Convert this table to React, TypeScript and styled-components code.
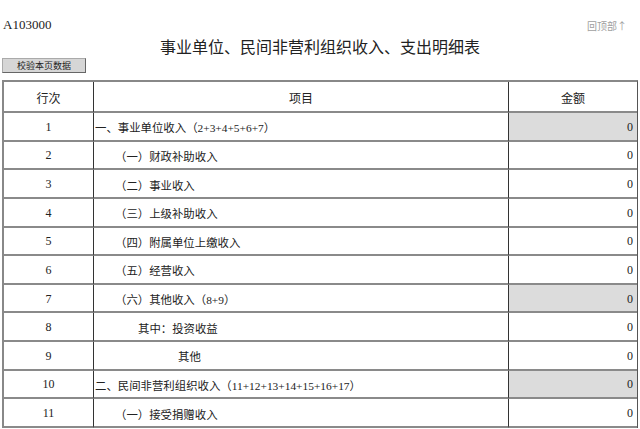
import React from "react";
import styled, { createGlobalStyle } from "styled-components";

const Global = createGlobalStyle`
  html, body { margin: 0; padding: 0; background: #fff; }
  body { font-family: "Liberation Serif", "Noto Sans CJK SC", serif; color: #222; }
`;

const Page = styled.div`
  width: 640px;
  height: 429px;
  overflow: hidden;
  padding: 0 2px;
  box-sizing: border-box;
`;

const TopBar = styled.div`
  display: flex;
  justify-content: space-between;
  align-items: center;
  height: 14px;
  margin-top: 18px;
`;

const Code = styled.span`
  font-family: "Liberation Serif", serif;
  font-size: 13px;
  color: #222;
  padding-left: 1px;
`;

const BackTop = styled.span`
  font-family: "Noto Sans CJK SC", sans-serif;
  font-size: 10px;
  color: #a0a0a0;
  margin-right: 11px;
`;

const Title = styled.h1`
  margin: 2px 0 0 0;
  height: 24px;
  line-height: 24px;
  text-align: center;
  font-family: "Noto Sans CJK SC", serif;
  font-weight: 400;
  font-size: 16px;
  color: #222;
`;

const CheckButton = styled.button`
  display: block;
  margin: 0;
  width: 84px;
  height: 15px;
  padding: 0;
  background: #d6d6d6;
  border: 1px solid #666;
  border-top-color: #aaa;
  border-left-color: #aaa;
  font-family: "Noto Sans CJK SC", sans-serif;
  font-size: 9px;
  line-height: 13px;
  color: #222;
`;

const Table = styled.div`
  margin-top: 7px;
  width: 636px;
  display: grid;
  grid-template-columns: 90px 415px 1fr;
  grid-template-rows: 31px repeat(11, 28.64px);
  border-top: 2px solid #888;
  border-left: 2px solid #888;
  border-right: 1px solid #555;
  box-sizing: border-box;
`;

const Cell = styled.div<{ $align?: "left" | "center" | "right"; $gray?: boolean; $indent?: number; $last?: boolean }>`
  display: flex;
  align-items: center;
  justify-content: ${(p) => (p.$align === "left" ? "flex-start" : p.$align === "right" ? "flex-end" : "center")};
  padding-top: 2px;
  padding-left: ${(p) => p.$indent ?? 0}px;
  padding-right: ${(p) => (p.$align === "right" ? 4 : 0)}px;
  border-bottom: 2px solid #8a8a8a;
  border-right: ${(p) => (p.$last ? "none" : "1px solid #333")};
  background: ${(p) => (p.$gray ? "#dcdcdc" : "#fff")};
  font-size: 11.4px;
  color: #222;
  white-space: nowrap;
  box-sizing: border-box;
  overflow: hidden;
`;

const HeadCell = styled(Cell)`
  font-family: "Noto Sans CJK SC", sans-serif;
  font-size: 12px;
`;

const RowNo = styled.span`
  font-family: "Liberation Serif", serif;
  font-size: 12px;
  color: #222;
`;

const Amount = styled.span`
  font-family: "Liberation Serif", serif;
  font-size: 12px;
`;

type Row = { n: string; label: string; indent: number; gray?: boolean };

const rows: Row[] = [
  { n: "1", label: "一、事业单位收入（2+3+4+5+6+7）", indent: 1, gray: true },
  { n: "2", label: "（一）财政补助收入", indent: 21 },
  { n: "3", label: "（二）事业收入", indent: 21 },
  { n: "4", label: "（三）上级补助收入", indent: 21 },
  { n: "5", label: "（四）附属单位上缴收入", indent: 21 },
  { n: "6", label: "（五）经营收入", indent: 21 },
  { n: "7", label: "（六）其他收入（8+9）", indent: 21, gray: true },
  { n: "8", label: "其中：投资收益", indent: 44 },
  { n: "9", label: "其他", indent: 84 },
  { n: "10", label: "二、民间非营利组织收入（11+12+13+14+15+16+17）", indent: 1, gray: true },
  { n: "11", label: "（一）接受捐赠收入", indent: 21 },
];

export default function App() {
  return (
    <>
      <Global />
      <Page>
        <TopBar>
          <Code>A103000</Code>
          <BackTop>回顶部↑</BackTop>
        </TopBar>
        <Title>事业单位、民间非营利组织收入、支出明细表</Title>
        <CheckButton>校验本页数据</CheckButton>
        <Table>
          <HeadCell>行次</HeadCell>
          <HeadCell>项目</HeadCell>
          <HeadCell $last>金额</HeadCell>
          {rows.map((r) => (
            <React.Fragment key={r.n}>
              <Cell>
                <RowNo>{r.n}</RowNo>
              </Cell>
              <Cell $align="left" $indent={r.indent}>{r.label}</Cell>
              <Cell $align="right" $gray={r.gray} $last>
                <Amount>0</Amount>
              </Cell>
            </React.Fragment>
          ))}
        </Table>
      </Page>
    </>
  );
}
